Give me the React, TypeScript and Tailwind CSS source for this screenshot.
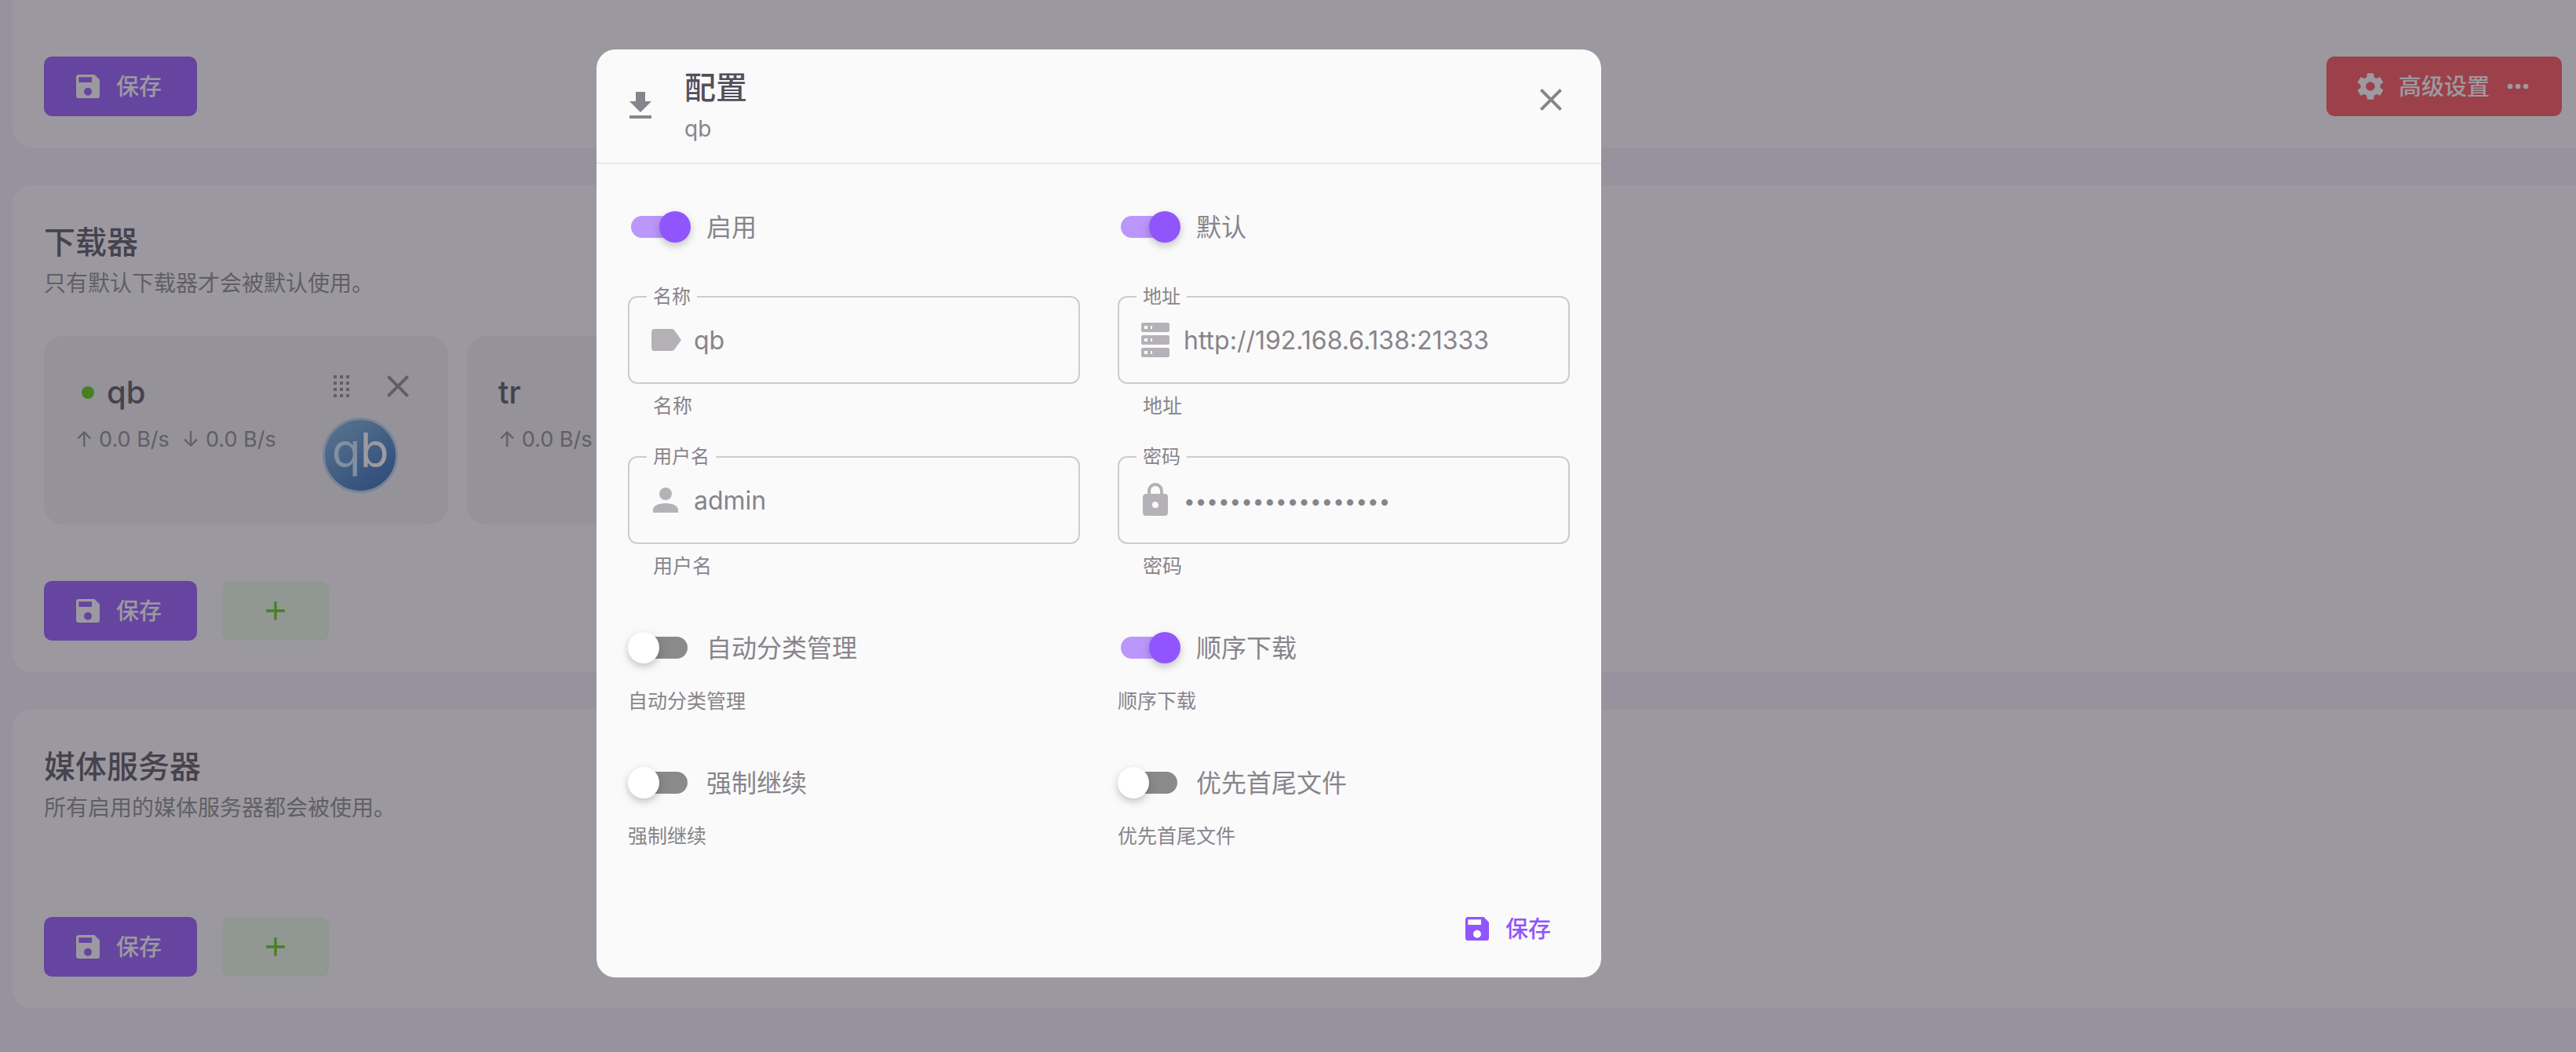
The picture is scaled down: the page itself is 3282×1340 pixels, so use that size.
import React, { useId, useState } from "react";

const paths = {
  save: "M15,9H5V5H15M12,19A3,3 0 0,1 9,16A3,3 0 0,1 12,13A3,3 0 0,1 15,16A3,3 0 0,1 12,19M17,3H5C3.89,3 3,3.9 3,5V19A2,2 0 0,0 5,21H19A2,2 0 0,0 21,19V7L17,3Z",
  cog: "M12,15.5A3.5,3.5 0 0,1 8.5,12A3.5,3.5 0 0,1 12,8.5A3.5,3.5 0 0,1 15.5,12A3.5,3.5 0 0,1 12,15.5M19.43,12.97C19.47,12.65 19.5,12.33 19.5,12C19.5,11.67 19.47,11.34 19.43,11L21.54,9.37C21.73,9.22 21.78,8.95 21.66,8.73L19.66,5.27C19.54,5.05 19.27,4.96 19.05,5.05L16.56,6.05C16.04,5.66 15.5,5.32 14.87,5.07L14.5,2.42C14.46,2.18 14.25,2 14,2H10C9.75,2 9.54,2.18 9.5,2.42L9.13,5.07C8.5,5.32 7.96,5.66 7.44,6.05L4.95,5.05C4.73,4.96 4.46,5.05 4.34,5.27L2.34,8.73C2.21,8.95 2.27,9.22 2.46,9.37L4.57,11C4.53,11.34 4.5,11.67 4.5,12C4.5,12.33 4.53,12.65 4.57,12.97L2.46,14.63C2.27,14.78 2.21,15.05 2.34,15.27L4.34,18.73C4.46,18.95 4.73,19.03 4.95,18.95L7.44,17.94C7.96,18.34 8.5,18.68 9.13,18.93L9.5,21.58C9.54,21.82 9.75,22 10,22H14C14.25,22 14.46,21.82 14.5,21.58L14.87,18.93C15.5,18.67 16.04,18.34 16.56,17.94L19.05,18.95C19.27,19.03 19.54,18.95 19.66,18.73L21.66,15.27C21.78,15.05 21.73,14.78 21.54,14.63L19.43,12.97Z",
  dots: "M16,12A2,2 0 0,1 18,10A2,2 0 0,1 20,12A2,2 0 0,1 18,14A2,2 0 0,1 16,12M10,12A2,2 0 0,1 12,10A2,2 0 0,1 14,12A2,2 0 0,1 12,14A2,2 0 0,1 10,12M4,12A2,2 0 0,1 6,10A2,2 0 0,1 8,12A2,2 0 0,1 6,14A2,2 0 0,1 4,12Z",
  drag: "M7,19V17H9V19H7M11,19V17H13V19H11M15,19V17H17V19H15M7,15V13H9V15H7M11,15V13H13V15H11M15,15V13H17V15H15M7,11V9H9V11H7M11,11V9H13V11H11M15,11V9H17V11H15M7,7V5H9V7H7M11,7V5H13V7H11M15,7V5H17V7H15Z",
  close: "M19,6.41L17.59,5L12,10.59L6.41,5L5,6.41L10.59,12L5,17.59L6.41,19L12,13.41L17.59,19L19,17.59L13.41,12L19,6.41Z",
  plus: "M19,13H13V19H11V13H5V11H11V5H13V11H19V13Z",
  download: "M5,20H19V18H5M19,9H15V3H9V9H5L12,16L19,9Z",
  label: "M17.63,5.84C17.27,5.33 16.67,5 16,5H5A2,2 0 0,0 3,7V17A2,2 0 0,0 5,19H16C16.67,19 17.27,18.66 17.63,18.15L22,12L17.63,5.84Z",
  server: "M4,1H20A1,1 0 0,1 21,2V6A1,1 0 0,1 20,7H4A1,1 0 0,1 3,6V2A1,1 0 0,1 4,1M4,9H20A1,1 0 0,1 21,10V14A1,1 0 0,1 20,15H4A1,1 0 0,1 3,14V10A1,1 0 0,1 4,9M4,17H20A1,1 0 0,1 21,18V22A1,1 0 0,1 20,23H4A1,1 0 0,1 3,22V18A1,1 0 0,1 4,17M9,5H10V3H9V5M9,13H10V11H9V13M9,21H10V19H9V21M5,3V5H7V3H5M5,11V13H7V11H5M5,19V21H7V19H5Z",
  account: "M12,4A4,4 0 0,1 16,8A4,4 0 0,1 12,12A4,4 0 0,1 8,8A4,4 0 0,1 12,4M12,14C16.42,14 20,15.79 20,18V20H4V18C4,15.79 7.58,14 12,14Z",
  lock: "M12,17A2,2 0 0,0 14,15C14,13.89 13.1,13 12,13A2,2 0 0,0 10,15A2,2 0 0,0 12,17M18,8A2,2 0 0,1 20,10V20A2,2 0 0,1 18,22H6A2,2 0 0,1 4,20V10C4,8.89 4.9,8 6,8H7V6A5,5 0 0,1 12,1A5,5 0 0,1 17,6V8H18M12,3A3,3 0 0,0 9,6V8H15V6A3,3 0 0,0 12,3Z",
};

type IconName = keyof typeof paths;

function Icon({ name, className }: { name: IconName; className: string }) {
  return (
    <svg viewBox="0 0 24 24" fill="currentColor" fillRule="evenodd" aria-hidden="true" className={`shrink-0 ${className}`}>
      <path d={paths[name]} />
    </svg>
  );
}

function SaveButton() {
  return (
    <button type="button" className="flex h-[76px] items-center gap-4 rounded-[10px] bg-[#9155fd] pr-[45px] pl-9 text-[29px] font-medium text-white">
      <Icon name="save" className="size-10" />
      <span className="pt-0.5">保存</span>
    </button>
  );
}

function AddButton() {
  return (
    <button type="button" aria-label="添加" className="flex h-[76px] items-center rounded-[10px] bg-[#e9f8e2] px-12 text-[#56ca00]">
      <Icon name="plus" className="size-10" />
    </button>
  );
}

function QbLogo() {
  return (
    <svg viewBox="0 0 96 96" role="img" aria-label="qBittorrent" className="size-24">
      <defs>
        <linearGradient id="qb-fill" x1="0.2" y1="0.1" x2="0.75" y2="0.85">
          <stop offset="0" stopColor="#70a9d8" />
          <stop offset="1" stopColor="#2e6bb7" />
        </linearGradient>
      </defs>
      <circle cx="48" cy="48" r="46.5" fill="url(#qb-fill)" stroke="#b8d2ea" strokeWidth="3" />
      <g fontFamily="Inter, sans-serif" fontSize="60" fontWeight="400" textAnchor="middle">
        <text x="30" y="63" fill="#c8e8ff">q</text>
        <text x="66" y="63" fill="#ffffff">b</text>
      </g>
    </svg>
  );
}

type DownloaderProps = { name: string; rates: string[]; online?: boolean; logo?: React.ReactNode };

function DownloaderCard({ name, rates, online, logo }: DownloaderProps) {
  return (
    <article className="flex min-h-[240px] justify-between rounded-3xl bg-[#f0eff2] p-10">
      <div>
        <h3 className="flex h-16 items-center gap-4 text-[40px] font-medium text-[#534f5a]">
          {online && <span className="ml-2 size-4 rounded-full bg-[#56ca00]" />}
          {name}
        </h3>
        <p className="flex gap-4 text-[27px] leading-14 whitespace-nowrap text-[#89868d]">
          {rates.map((rate) => (
            <span key={rate}>{rate}</span>
          ))}
        </p>
      </div>
      {logo && (
        <div className="flex flex-col items-end gap-4 text-[#89868d]">
          <div className="flex gap-6">
            <button type="button" aria-label="拖动">
              <Icon name="drag" className="size-12" />
            </button>
            <button type="button" aria-label="删除">
              <Icon name="close" className="size-12" />
            </button>
          </div>
          <div className="mr-6">{logo}</div>
        </div>
      )}
    </article>
  );
}

function Section({ title, subtitle, children }: { title: string; subtitle: string; children?: React.ReactNode }) {
  return (
    <section className="rounded-l-3xl bg-[#fdfcfd] py-10 pr-[18px] pl-10">
      <h2 className="text-[40px] leading-[66px] font-medium text-[#534f5a]">{title}</h2>
      <p className="text-[28px] leading-[38px] text-[#89868d]">{subtitle}</p>
      <div className="mt-12 grid grid-cols-6 gap-6">{children}</div>
      <div className="mt-18 flex gap-8">
        <SaveButton />
        <AddButton />
      </div>
    </section>
  );
}

function Switch({ label, hint, on }: { label: string; hint?: string; on?: boolean }) {
  const [checked, setChecked] = useState(!!on);
  return (
    <div>
      <label className="relative flex h-20 items-center gap-5 text-[32px] text-[#87848b]">
        <input type="checkbox" className="sr-only" checked={checked} onChange={(e) => setChecked(e.target.checked)} />
        <span className="relative h-10 w-20 shrink-0">
          <span className={`absolute top-1.5 left-1 h-7 w-18 rounded-full ${checked ? "bg-[#bb97fc]" : "bg-[#8a8a8a]"}`} />
          <span
            className={`absolute top-0 size-10 rounded-full shadow-[0_4px_8px_rgba(0,0,0,0.16),0_4px_16px_rgba(0,0,0,0.08)] ${
              checked ? "right-0 bg-[#9155fd]" : "left-0 bg-white"
            }`}
          />
        </span>
        <span className="pt-0.5">{label}</span>
      </label>
      {hint && <p className="pt-3 text-[25px] leading-8 text-[#87848b]">{hint}</p>}
    </div>
  );
}

function Field({ label, icon, value, secret }: { label: string; icon: IconName; value: string; secret?: boolean }) {
  const id = useId();
  return (
    <div>
      <div className="relative flex h-28 items-center gap-3 rounded-xl border-2 border-[#cdcdcf] px-[22px]">
        <label htmlFor={id} className="absolute -top-[17px] left-[22px] bg-[#fafafa] px-2 text-[24px] leading-8 text-[#87848b]">
          {label}
        </label>
        <Icon name={icon} className="size-12 text-[#b4b2b7]" />
        <input
          id={id}
          type={secret ? "password" : "text"}
          defaultValue={value}
          className={`h-12 min-w-0 flex-1 bg-transparent pt-0.5 text-[#87848b] outline-none ${secret ? "text-[26px]" : "text-[32px]"}`}
        />
      </div>
      <p className="px-8 pt-3 text-[25px] leading-8 text-[#87848b]">{label}</p>
    </div>
  );
}

function ConfigDialog() {
  return (
    <div className="fixed inset-0 flex items-center justify-center bg-[#3a3541]/50 pr-[482px] pb-8">
      <div role="dialog" aria-modal="true" aria-labelledby="dialog-title" className="w-full max-w-[1280px] rounded-3xl bg-[#fafafa]">
        <header className="flex items-center border-b-2 border-[#e7e7e8] py-4 pr-10 pl-8">
          <Icon name="download" className="size-12 text-[#87848b]" />
          <div className="ml-8 flex-1 pb-2">
            <h2 id="dialog-title" className="text-[40px] leading-[66px] font-medium text-[#534f5a]">配置</h2>
            <p className="text-[28px] leading-[38px] text-[#87848b]">qb</p>
          </div>
          <button type="button" aria-label="关闭" className="mt-6 self-start text-[#87848b]">
            <Icon name="close" className="size-12" />
          </button>
        </header>
        <form className="grid grid-cols-2 gap-12 p-10">
          <Switch label="启用" on />
          <Switch label="默认" on />
          <Field label="名称" icon="label" value="qb" />
          <Field label="地址" icon="server" value="http://192.168.6.138:21333" />
          <Field label="用户名" icon="account" value="admin" />
          <Field label="密码" icon="lock" value="abcdefghijklmnopqr" secret />
          <Switch label="自动分类管理" hint="自动分类管理" />
          <Switch label="顺序下载" hint="顺序下载" on />
          <Switch label="强制继续" hint="强制继续" />
          <Switch label="优先首尾文件" hint="优先首尾文件" />
        </form>
        <footer className="flex justify-end p-6">
          <button type="button" className="flex h-[76px] items-center gap-4 px-10 text-[29px] font-medium text-[#9155fd]">
            <Icon name="save" className="size-10" />
            <span className="pt-0.5">保存</span>
          </button>
        </footer>
      </div>
    </div>
  );
}

export default function App() {
  return (
    <div className="min-h-screen overflow-hidden bg-[#f3f1fb] font-[Inter,'Noto_Sans_CJK_SC',sans-serif]">
      <main className="flex flex-col gap-12 pb-14 pl-4">
        <section className="flex justify-between rounded-bl-3xl bg-[#fdfcfd] pt-18 pr-[18px] pb-10 pl-10">
          <SaveButton />
          <button type="button" className="flex h-[76px] items-center gap-4 rounded-[10px] bg-[#ff4c51] px-9 text-[29px] font-medium text-white">
            <Icon name="cog" className="size-10" />
            <span className="pt-0.5">高级设置</span>
            <Icon name="dots" className="size-10" />
          </button>
        </section>
        <Section title="下载器" subtitle="只有默认下载器才会被默认使用。">
          <DownloaderCard name="qb" rates={["↑ 0.0 B/s", "↓ 0.0 B/s"]} online logo={<QbLogo />} />
          <DownloaderCard name="tr" rates={["↑ 0.0 B/s"]} />
        </Section>
        <Section title="媒体服务器" subtitle="所有启用的媒体服务器都会被使用。" />
      </main>
      <ConfigDialog />
    </div>
  );
}
